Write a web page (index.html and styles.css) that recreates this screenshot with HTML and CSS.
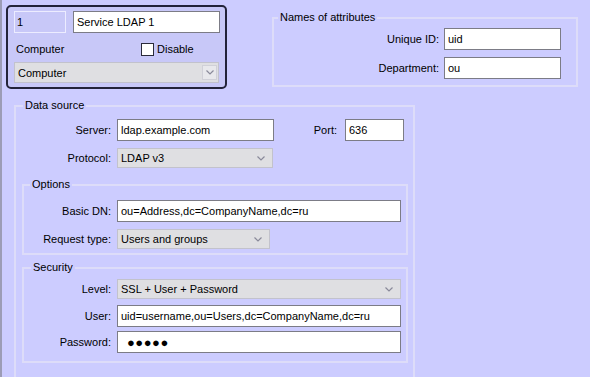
FILE: index.html
```html
<!DOCTYPE html>
<html lang="en">
<head>
    <meta charset="UTF-8">
    <meta name="viewport" content="width=device-width, initial-scale=1.0">
    <title>Service LDAP 1</title>
    <link rel="stylesheet" href="styles.css">
</head>
<body>

<div class="top">
    <!-- Object card -->
    <div class="card">
        <div class="card-row">
            <input class="field field-id" value="1" readonly>
            <input class="field field-name" value="Service LDAP 1">
        </div>
        <div class="card-meta">
            <span class="meta-label">Computer</span>
            <label class="check"><span class="box"></span>Disable</label>
        </div>
        <div class="select select-card">
            <span>Computer</span>
            <span class="select-btn">
                <svg width="8" height="5" viewBox="0 0 8 5"><path d="M0.5 0.5 L4 4 L7.5 0.5" fill="none" stroke="#8a8a9a" stroke-width="1.2"/></svg>
            </span>
        </div>
    </div>

    <!-- Names of attributes -->
    <fieldset class="group attrs">
        <legend>Names of attributes</legend>
        <div class="row">
            <label class="label">Unique ID:</label>
            <input class="field attr-field" value="uid">
        </div>
        <div class="row row-gap">
            <label class="label">Department:</label>
            <input class="field attr-field" value="ou">
        </div>
    </fieldset>
</div>

<!-- Data source -->
<fieldset class="group source">
    <legend>Data source</legend>
    <div class="row">
        <label class="label src-label">Server:</label>
        <input class="field server-field" value="ldap.example.com">
        <label class="label port-label">Port:</label>
        <input class="field port-field" value="636">
    </div>
    <div class="row row-gap">
        <label class="label src-label">Protocol:</label>
        <div class="select protocol-select">
            <span>LDAP v3</span>
            <svg width="8" height="5" viewBox="0 0 8 5"><path d="M0.5 0.5 L4 4 L7.5 0.5" fill="none" stroke="#8a8a9a" stroke-width="1.2"/></svg>
        </div>
    </div>

    <fieldset class="group sub options">
        <legend>Options</legend>
        <div class="row">
            <label class="label">Basic DN:</label>
            <input class="field wide" value="ou=Address,dc=CompanyName,dc=ru">
        </div>
        <div class="row row-gap">
            <label class="label">Request type:</label>
            <div class="select request-select">
                <span>Users and groups</span>
                <svg width="8" height="5" viewBox="0 0 8 5"><path d="M0.5 0.5 L4 4 L7.5 0.5" fill="none" stroke="#8a8a9a" stroke-width="1.2"/></svg>
            </div>
        </div>
    </fieldset>

    <fieldset class="group sub security">
        <legend>Security</legend>
        <div class="row">
            <label class="label">Level:</label>
            <div class="select wide">
                <span>SSL + User + Password</span>
                <svg width="8" height="5" viewBox="0 0 8 5"><path d="M0.5 0.5 L4 4 L7.5 0.5" fill="none" stroke="#8a8a9a" stroke-width="1.2"/></svg>
            </div>
        </div>
        <div class="row user-row">
            <label class="label">User:</label>
            <input class="field wide" value="uid=username,ou=Users,dc=CompanyName,dc=ru">
        </div>
        <div class="row pass-row">
            <label class="label">Password:</label>
            <input class="field wide password" value="●●●●●">
        </div>
    </fieldset>
</fieldset>

</body>
</html>
```

FILE: styles.css
```css
html, body {
    height: 100%;
}

body {
    margin: 0;
    background-color: #ccccff;
    font-family: 'Liberation Sans', Arial, sans-serif;
    font-size: 11px;
    color: #000;
    overflow: hidden;
    box-shadow: inset 2px 0 0 #9c9cb6;
}

.top {
    display: flex;
    align-items: flex-start;
}

/* object card */
.card {
    box-sizing: border-box;
    width: 221px;
    height: 84px;
    margin: 5px 0 0 6px;
    padding: 4px 6px 0 6px;
    border: 2px solid #23233a;
    border-radius: 5px;
    background-color: #c8c8f8;
}

.card-row {
    display: flex;
    gap: 7px;
}

.field {
    box-sizing: border-box;
    height: 22px;
    margin: 0;
    padding: 0 3px;
    border: 1px solid #7c7c86;
    background-color: #fff;
    font-family: inherit;
    font-size: 11px;
    color: #000;
    outline: none;
}

.field-id {
    width: 52px;
    padding-left: 2px;
    background-color: #c8c8f8;
    border-color: #ececff;
}

.field-name {
    width: 147px;
}

.card-meta {
    display: grid;
    grid-template-columns: 127px auto;
    align-items: center;
    height: 16px;
    margin-top: 8px;
}

.meta-label {
    padding-left: 2px;
}

.check {
    display: flex;
    align-items: center;
    gap: 3px;
}

.box {
    box-sizing: border-box;
    width: 13px;
    height: 13px;
    border: 1px solid #2a2a3a;
    background-color: #fff;
}

.select {
    box-sizing: border-box;
    display: flex;
    align-items: center;
    justify-content: space-between;
    height: 20px;
    padding: 0 7px 0 3px;
    border: 1px solid #c2c2cc;
    background-color: #dfdfe2;
}

.select-card {
    width: 205px;
    height: 21px;
    margin-top: 5px;
    padding-right: 1px;
}

.select-btn {
    box-sizing: border-box;
    display: flex;
    align-items: center;
    justify-content: center;
    width: 15px;
    height: 15px;
    border: 1px solid #d0d0d8;
    background-color: #e8e8ec;
}

/* groups */
.group {
    margin: 0;
    border: 2px solid #dddcf9;
}

.group legend {
    padding: 0 2px;
    line-height: 13px;
}

.row {
    display: flex;
    align-items: center;
    gap: 6px;
}

.row-gap {
    margin-top: 7px;
}

.label {
    text-align: right;
}

.attrs {
    box-sizing: border-box;
    width: 306px;
    margin: 11px 0 0 45px;
    padding: 4px 0 6px 0;
}

.attrs legend {
    margin-left: 4px;
}

.attrs .row {
    gap: 5px;
}

.attrs .label {
    width: 165px;
}

.attr-field {
    width: 117px;
}

.source {
    box-sizing: border-box;
    width: 401px;
    margin: 10px 0 0 14px;
    padding: 7px 5px 20px 6px;
}

.source legend {
    margin-left: 1px;
}

.src-label {
    width: 89px;
}

.server-field {
    width: 157px;
}

.port-label {
    width: 57px;
    margin-right: 2px;
}

.port-field {
    width: 59px;
}

.protocol-select {
    width: 156px;
}

.sub {
    padding: 9px 5px 4px 0;
}

.sub .label {
    width: 87px;
}

.wide {
    flex: 1;
    min-width: 0;
}

.options {
    margin-top: 10px;
}

.options legend {
    margin-left: 6px;
}

.request-select {
    width: 153px;
}

.security {
    margin-top: 6px;
    padding-top: 5px;
    padding-bottom: 8px;
}

.security legend {
    margin-left: 7px;
}

.user-row {
    margin-top: 6px;
}

.pass-row {
    margin-top: 4px;
}

.password {
    padding-left: 9px;
    font-size: 13px;
    letter-spacing: 0.5px;
}
```
